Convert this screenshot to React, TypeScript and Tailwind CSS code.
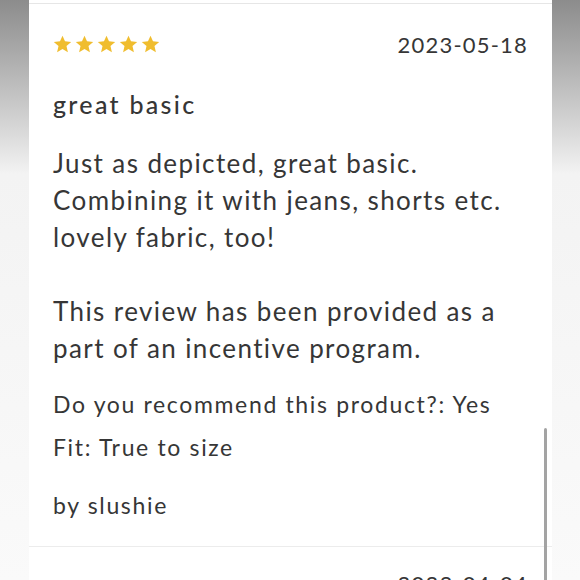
import React from "react";

const Star = () => (
  <svg width="19" height="18" viewBox="0 0 24 23" className="block">
    <path d="M12 0.8l3.2 7.3 7.9 0.7-6 5.3 1.8 7.8L12 17.8l-6.9 4.1 1.8-7.8-6-5.3 7.9-0.7z" fill="#f0bd2f" />
  </svg>
);

export default function App() {
  return (
    <div className="w-[580px] h-[580px] overflow-hidden flex bg-white" style={{ fontFamily: "Lato, 'Open Sans', sans-serif" }}>
      <div className="w-[29px] h-full bg-gradient-to-b from-[#8c8c8c] via-[#f3f3f3] via-30% to-[#fafafa]" />
      <div className="flex-1 relative bg-white pt-[3px]">
        <div className="border-t border-[#e6e6e6]">
          <div className="px-[24px] pt-[28px] text-[#363636]">
            <div className="flex items-center justify-between h-[24px]">
              <div className="flex gap-[3px]">
                <Star /><Star /><Star /><Star /><Star />
              </div>
              <div className="text-[22px] tracking-[1.2px]">2023-05-18</div>
            </div>
            <div className="mt-[33px] text-[25px] font-medium leading-[30px] tracking-[2.3px]">great basic</div>
            <div className="mt-[26px] text-[26px] leading-[37px] tracking-[1.4px]">
              <p>Just as depicted, great basic.<br />Combining it with jeans, shorts etc.<br />lovely fabric, too!</p>
              <p className="mt-[37px]">This review has been provided as a<br />part of an incentive program.</p>
            </div>
            <div className="mt-[16px] text-[23px] leading-[43px] tracking-[1.65px]">
              <div>Do you recommend this product?: Yes</div>
              <div>Fit: True to size</div>
            </div>
            <div className="mt-[21px] text-[23px] leading-[30px] tracking-[1.65px]">by slushie</div>
          </div>
          <div className="mt-[26px] border-t border-[#ececec]" />
          <div className="px-[24px] pt-[20px] flex justify-end text-[22px] text-[#363636] tracking-[1.2px]">2023-04-04</div>
        </div>
        <div className="absolute right-[5px] top-[428px] w-[3px] h-[160px] rounded-full bg-[#a3a3a3]" />
      </div>
      <div className="w-[28px] h-full bg-gradient-to-b from-[#8c8c8c] via-[#f3f3f3] via-30% to-[#fafafa]" />
    </div>
  );
}
